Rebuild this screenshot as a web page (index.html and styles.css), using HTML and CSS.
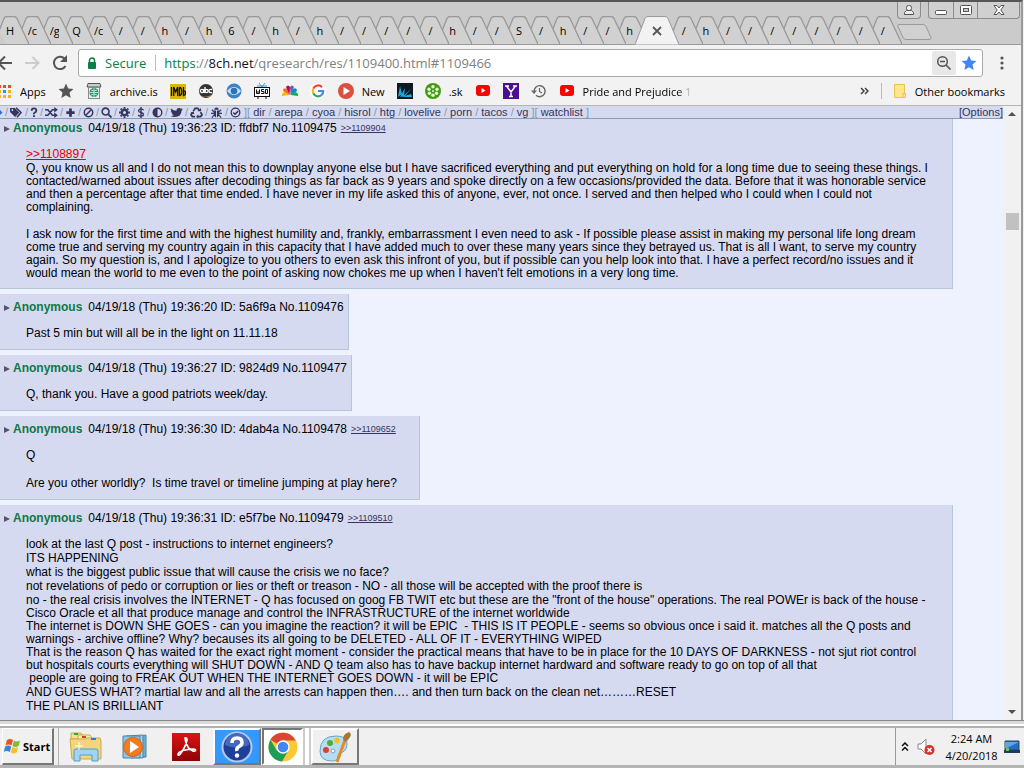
FILE: index.html
```html
<!DOCTYPE html>
<html lang="en">
<head>
  <meta charset="UTF-8">
  <meta name="viewport" content="width=device-width, initial-scale=1.0">
  <title>/qresearch/</title>
  <link rel="stylesheet" href="styles.css">
</head>
<body>
  <svg class="sprite" aria-hidden="true">
    <symbol id="youtube" viewBox="0 0 16 16"><rect x="1" y="2" width="14" height="11" rx="3" fill="#f00"/><path d="M6.500 5v5l4-2.500z" fill="#fff"/></symbol>
  </svg>

  <div class="browser">
    <header class="tab-strip">
      <div class="tabs" id="tabs"></div>
      <div class="strip-end">
        <div class="window-controls">
          <button class="user" aria-label="User"><svg width="12" height="12" viewBox="0 0 12 12"><rect x="3.500" y="1.500" width="5" height="5" rx="2" fill="#eee" stroke="#555"/><path d="M1.500 10.500V8.500l2-2h5l2 2v2z" fill="#eee" stroke="#555"/></svg></button>
          <button class="minimize" aria-label="Minimize"><svg width="12" height="12" viewBox="0 0 12 12"><rect x=".5" y="6.500" width="11" height="4" rx="1" fill="#fff" stroke="#555"/></svg></button>
          <button class="maximize" aria-label="Maximize"><svg width="12" height="12" viewBox="0 0 12 12"><rect x=".5" y="1.500" width="11" height="9" rx="1" fill="#fff" stroke="#555"/><rect x="3.500" y="4.500" width="5" height="3" fill="#ccc" stroke="#555"/></svg></button>
          <button class="close" aria-label="Close"><svg width="12" height="12" viewBox="0 0 12 12"><path d="M1 1.500h3l2 2.500 2-2.500h3L7.800 6l3.200 4.500H8L6 8l-2 2.500H1L4.200 6z" fill="#fff" stroke="#555"/></svg></button>
        </div>
        <button class="new-tab" aria-label="New tab"><svg width="35" height="18" viewBox="0 0 35 18"><path d="M2 1.500h24q2 0 3 2l5 11q0 2-2 2H9q-2 0-3-2L1 3.500q-.5-2 1-2z" fill="#d1d1d1" stroke="#999"/></svg></button>
      </div>
    </header>

    <div class="toolbar">
      <button class="nav-button back" aria-label="Back"><svg width="18" height="18" viewBox="0 0 18 18"><path d="M17 9H4M10 2.500L3.500 9l6.500 6.500" fill="none" stroke="#555" stroke-width="2"/></svg></button>
      <button class="nav-button" aria-label="Forward"><svg width="18" height="18" viewBox="0 0 18 18"><path d="M2 9h13M9.500 3l6 6-6 6" fill="none" stroke="#ccc" stroke-width="2"/></svg></button>
      <button class="nav-button" aria-label="Reload"><svg width="18" height="18" viewBox="0 0 18 18"><path d="M14.500 12A6.200 6.200 0 1 1 13.500 4.500" fill="none" stroke="#555" stroke-width="2"/><path d="M16 1v7H9z" fill="#555"/></svg></button>
      <div class="omnibox">
        <svg width="10" height="13" viewBox="0 0 10 13"><path d="M2.500 6V3.500a2.500 2.500 0 0 1 5 0V6" fill="none" stroke="#0b8043" stroke-width="1.500"/><rect x="1" y="5" width="8" height="7" rx="1" fill="#0b8043"/></svg>
        <span class="secure">Secure</span>
        <span class="url"><span class="scheme">https</span>://<span class="host">8ch.net</span>/qresearch/res/1109400.html#1109466</span>
        <button class="zoom-button" aria-label="Zoom"><svg width="16" height="16" viewBox="0 0 16 16"><circle cx="6.500" cy="6.500" r="4.800" fill="none" stroke="#555" stroke-width="1.500"/><path d="M4 6.500h5M10 10l4.500 4.500" stroke="#555" stroke-width="1.700"/></svg></button>
        <button class="star-button" aria-label="Bookmarked"><svg width="16" height="16" viewBox="0 0 16 16"><path d="M8 .5l2.200 5 5.300.5-4 3.600 1.200 5.400L8 12.200 3.300 15l1.200-5.400-4-3.600 5.300-.5z" fill="#4285f4"/></svg></button>
      </div>
      <button class="menu-button" aria-label="Menu"><svg width="4" height="14" viewBox="0 0 4 14" fill="#555"><circle cx="2" cy="2" r="1.600"/><circle cx="2" cy="7" r="1.600"/><circle cx="2" cy="12" r="1.600"/></svg></button>
    </div>

    <nav class="bookmarks">
      <a href="#"><svg width="12" height="14" viewBox="0 0 12 14"><path d="M0 1h1v3H0zM3 1h3v3H3z" fill="#f44336"/><path d="M8 1h3v3H8z" fill="#f44336"/><path d="M0 6h1v3H0zM8 6h3v3H8z" fill="#fbb400"/><path d="M3 6h3v3H3z" fill="#2196f3"/><path d="M0 11h1v3H0zM3 11h3v3H3zM8 11h3v3H8z" fill="#fbb400"/></svg>Apps</a>
      <a href="#" aria-label="Starred"><svg width="16" height="16" viewBox="0 0 16 16"><path d="M8 .5l2.200 5 5.300.5-4 3.600 1.200 5.400L8 12.200 3.300 15l1.200-5.400-4-3.600 5.300-.5z" fill="#555"/></svg></a>
      <a href="#"><svg width="16" height="16" viewBox="0 0 16 16"><path d="M2 .5h12l1 3.500H1z" fill="#ccc" stroke="#555"/><rect x="2.500" y="4.500" width="11" height="11" fill="#eee" stroke="#888"/><circle cx="8" cy="9.500" r="4.500" fill="#159a6b"/><path d="M3.500 9.500h9M8 5v9M5 7q3 2 6 0M5 12q3-2 6 0" stroke="#aee5cf" fill="none"/></svg>archive.is</a>
      <a href="#" aria-label="IMDb"><svg width="16" height="16" viewBox="0 0 16 16"><rect width="16" height="15" y="1" fill="#d9b516"/><path d="M1.500 4v9M3.700 13V4l2 5 2-5v9M9.500 4.500v8q2.300 0 2.300-4t-2.300-4M13.500 4v8.500q2 0 2-2.500t-2-2" fill="none" stroke="#111" stroke-width="1.300"/></svg></a>
      <a href="#" aria-label="abc"><svg width="16" height="16" viewBox="0 0 16 16"><circle cx="8" cy="8" r="7" fill="#333"/><path d="M3 13q5 2 10-1L12 14H5z" fill="#b8933f"/><g fill="none" stroke="#fff" stroke-width="1.300"><circle cx="4" cy="8" r="1.600"/><path d="M6 6v4M7 4v6M14 6.500q-3-.5-3 1.500t3 1.500"/><circle cx="8.500" cy="8" r="1.600"/></g></svg></a>
      <a href="#" aria-label="CBS"><svg width="16" height="16" viewBox="0 0 16 16"><circle cx="8" cy="8" r="7.500" fill="#3d83c4"/><path d="M1 8q7-8 14 0-7 8-14 0z" fill="#cce2f5"/><circle cx="8" cy="8" r="3.300" fill="#2973b9"/></svg></a>
      <a href="#" aria-label="WSD"><svg width="16" height="16" viewBox="0 0 16 16"><path d="M5 0l3 4 3-4M3 3h10" fill="none" stroke="#3a9ad9"/><rect x=".5" y="4.500" width="15" height="9" fill="#fff" stroke="#111"/><path d="M2.500 6.500v4h3v-4M4 8v2.500M10 6.500H7.500v2H10v2H7M11.500 6.500v4h2v-4zM4 14v2M12 14v2" fill="none" stroke="#111"/></svg></a>
      <a href="#" aria-label="NBC"><svg width="16" height="16" viewBox="0 0 16 16"><path d="M7.500 12L0 13q-1-3 3-4z" fill="#fcb711"/><path d="M7.500 12L1 8q0-4 4-2z" fill="#f37021"/><path d="M7.500 12L4 4q2-3 4 0z" fill="#cc004c"/><path d="M8.500 12L8 4q2-3 4 0z" fill="#6460aa"/><path d="M8.500 12L11 6q4-2 4 2z" fill="#0089d0"/><path d="M8.500 12L13 9q4 1 3 4z" fill="#0db14b"/></svg></a>
      <a href="#" aria-label="Google"><svg width="16" height="16" viewBox="0 0 16 16"><circle cx="8" cy="8" r="8" fill="#fff"/><g fill="none" stroke-width="2.200"><path d="M12 4.200A5.200 5.200 0 0 0 3.300 5.700" stroke="#ea4335"/><path d="M3.300 5.700a5.200 5.200 0 0 0 0 4.600" stroke="#fbbc05"/><path d="M3.300 10.300A5.200 5.200 0 0 0 11.500 12" stroke="#34a853"/><path d="M11.500 12A5 5 0 0 0 13.200 8H8" stroke="#4285f4"/></g></svg></a>
      <a href="#"><svg width="16" height="16" viewBox="0 0 16 16"><circle cx="8" cy="8" r="8" fill="#d9503f"/><path d="M5.500 4v8l6.500-4z" fill="#fff"/></svg>New</a>
      <a href="#" aria-label="Fan"><svg width="16" height="16" viewBox="0 0 16 16"><rect width="16" height="16" fill="#101820"/><path d="M1 14L3 3l2 8zM3 14l5-9-1 8zM5 14l9-8-6 7zM4 14h11l-1-3z" fill="#1fa7e0"/></svg></a>
      <a href="#"><svg width="16" height="16" viewBox="0 0 16 16"><circle cx="8" cy="8" r="8" fill="#3f9b12"/><g fill="#e8f6d8"><circle cx="8" cy="3.800" r="1.700"/><circle cx="8" cy="12.200" r="1.700"/><circle cx="4" cy="6.200" r="1.700"/><circle cx="12" cy="6.200" r="1.700"/><circle cx="4.500" cy="10.300" r="1.700"/><circle cx="11.500" cy="10.300" r="1.700"/><circle cx="8" cy="8" r="1"/></g></svg>.sk</a>
      <a href="#" aria-label="YouTube"><svg width="16" height="16"><use href="#youtube"/></svg></a>
      <a href="#" aria-label="Yahoo"><svg width="16" height="16" viewBox="0 0 16 16"><rect width="16" height="16" fill="#4a0d93"/><path d="M3.500 3L8 9l4.500-6M8 8.500V14M2 3h4M10 3h4M6 13.500h4" fill="none" stroke="#fff" stroke-width="1.500"/></svg></a>
      <a href="#" aria-label="History"><svg width="16" height="16" viewBox="0 0 16 16"><path d="M3.200 9A5.500 5.500 0 1 1 5 12.300" fill="none" stroke="#666" stroke-width="1.400"/><path d="M0 7.500h6l-3 3.500z" fill="#666"/><path d="M8.500 5v3.500l2.500 1.500" fill="none" stroke="#666" stroke-width="1.200"/></svg></a>
      <a href="#" class="faded"><svg width="16" height="16"><use href="#youtube"/></svg>Pride and Prejudice 1</a>
      <button class="overflow" aria-label="More bookmarks"><svg width="9" height="8" viewBox="0 0 9 8"><path d="M1 1l3 3-3 3M5 1l3 3-3 3" fill="none" stroke="#444" stroke-width="1.500"/></svg></button>
      <a href="#" class="other"><svg width="14" height="16" viewBox="0 0 14 16"><path d="M1.500 1.500h10v13h-10z" fill="#ffe68f" stroke="#e8c34d"/><path d="M10 10.500h2.500v4H10z" fill="#ffe68f" stroke="#e8c34d"/></svg>Other bookmarks</a>
    </nav>

    <div class="viewport">
      <main class="page">
        <nav class="boardlist">
          <a href="#" class="icon edge" aria-label="Home"><svg viewBox="0 0 12 12"><path d="M8 2l4 4-4 4z" fill="#2a70c8"/></svg></a><i>/</i>
          <a href="#" class="icon wide" aria-label="Tags"><svg viewBox="0 0 14 12"><path d="M0 1h5l5 5-4.500 5L0 5.500z"/><path d="M6.500 1l5.500 5-4.500 5.200" fill="none" stroke="#34345c" stroke-width="1.600"/><circle cx="2.500" cy="3.300" r="1" fill="#d6daf0"/></svg></a><i>/</i>
          <a href="#" class="icon slim" aria-label="Help"><svg viewBox="0 0 8 12"><path d="M1.500 4q0-2.500 2.500-2.500T6.500 4Q6.500 5.300 5 6T4 8" fill="none" stroke="#34345c" stroke-width="2"/><path d="M3 9h2v2H3z"/></svg></a><i>/</i>
          <a href="#" class="icon wide" aria-label="Random"><svg viewBox="0 0 14 12"><path d="M0 3h3l5 6h3M0 9h3l5-6h3" fill="none" stroke="#34345c" stroke-width="1.700"/><path d="M10 0l4 3-4 3zM10 6l4 3-4 3z"/></svg></a><i>/</i>
          <a href="#" class="icon" aria-label="New board"><svg viewBox="0 0 12 12"><path d="M4.500 1.500h3v3h3v3h-3v3h-3v-3h-3v-3h3z"/></svg></a><i>/</i>
          <a href="#" class="icon" aria-label="Bans"><svg viewBox="0 0 12 12"><circle cx="6" cy="6" r="4.600" fill="none" stroke="#34345c" stroke-width="1.600"/><path d="M2.800 9.200l6.400-6.400" stroke="#34345c" stroke-width="1.600"/></svg></a><i>/</i>
          <a href="#" class="icon" aria-label="Search"><svg viewBox="0 0 12 12"><circle cx="5" cy="5" r="3.800" fill="none" stroke="#34345c" stroke-width="1.700"/><path d="M8 8l3.500 3.500" stroke="#34345c" stroke-width="2"/></svg></a><i>/</i>
          <a href="#" class="icon" aria-label="Manage"><svg viewBox="0 0 12 12"><circle cx="6" cy="6" r="3" fill="none" stroke="#34345c" stroke-width="2.600"/><path d="M6 0v2M6 10v2M0 6h2M10 6h2M1.800 1.800L3 3M9 9l1.200 1.200M1.800 10.200L3 9M9 3l1.200-1.200" stroke="#34345c" stroke-width="2"/></svg></a><i>/</i>
          <a href="#" class="icon slim" aria-label="Donate"><svg viewBox="0 0 8 12"><path d="M6.700 3.500Q6 2 4 2T1.300 4q0 1.500 2.700 2t2.700 2q0 2-2.700 2T1.300 8.500M4 0v12" fill="none" stroke="#34345c" stroke-width="1.500"/></svg></a><i>/</i>
          <a href="#" class="icon" aria-label="Contrast"><svg viewBox="0 0 12 12"><circle cx="6" cy="6" r="4.700" fill="none" stroke="#34345c" stroke-width="1.500"/><path d="M6 1a5 5 0 0 0 0 10z"/></svg></a><i>/</i>
          <a href="#" class="icon wide" aria-label="Twitter"><svg viewBox="0 0 14 12"><path d="M1 1.500Q3.500 4 7 4q0-3 2.700-3 1.200 0 2 .8L13.500 1l-1 1.800 1.500-.3-1.500 1.700Q12.300 11 5 11 2.500 11 .5 9.800q2 .2 3.700-1-2-.3-2.500-2h1Q.8 6 .8 4l1 .3Q0 3 1 1.500z"/></svg></a><i>/</i>
          <a href="#" class="icon wide" aria-label="Recycle"><svg viewBox="0 0 14 12"><path d="M3.500 4.500L5.500 1.500h3l1.500 2.500M11.500 5.500L13 8.500 11.500 10.500H8M5.500 10.500h-3L1 8.500 2.500 6" fill="none" stroke="#34345c" stroke-width="1.900"/><path d="M8 4.500h4V1zM9 8v4.500L6.500 10.500zM.5 6.500L4 4.500 4.500 8z"/></svg></a><i>/</i>
          <a href="#" class="icon wide" aria-label="Bug"><svg viewBox="0 0 14 12"><path d="M4.500 3Q4.500.500 7 .500T9.500 3zM3.800 3.800h2.700V11.500Q3.800 11 3.800 8zM7.500 3.800h2.700V8q0 3-2.700 3.500z"/><path d="M4 5L2 3M10 5l2-2M4 7H1M10 7h3M4 9l-2 2.500M10 9l2 2.500" stroke="#34345c" stroke-width="1.300"/></svg></a><i>/</i>
          <a href="#" class="icon" aria-label="Claim"><svg viewBox="0 0 12 12"><circle cx="6" cy="6" r="4.700" fill="none" stroke="#34345c" stroke-width="1.400"/><path d="M3.500 6l2 2L9 4.500" fill="none" stroke="#34345c" stroke-width="1.600"/></svg></a>
          <span class="boards">][ <a href="#">dir</a> / <a href="#">arepa</a> / <a href="#">cyoa</a> / <a href="#">hisrol</a> / <a href="#">htg</a> / <a href="#">lovelive</a> / <a href="#">porn</a> / <a href="#">tacos</a> / <a href="#">vg</a> ][ <a href="#">watchlist</a> ]</span>
          <a href="#" class="options">[Options]</a>
        </nav>

        <div class="thread">
          <article class="post">
            <p class="intro"><a href="#" class="arrow" aria-label="Post menu"></a><b class="name">Anonymous</b><span>04/19/18 (Thu) 19:36:23 ID: ffdbf7 No.1109475</span><a href="#" class="mentioned">&gt;&gt;1109904</a></p>
            <div class="body">
              <p><a href="#" class="quote">&gt;&gt;1108897</a></p>
              <p>Q, you know us all and I do not mean this to downplay anyone else but I have sacrificed everything and put everything on hold for a long time due to seeing these things. I contacted/warned about issues after decoding things as far back as 9 years and spoke directly on a few occasions/provided the data. Before that it was honorable service and then a percentage after that time ended. I have never in my life asked this of anyone, ever, not once. I served and then helped who I could when I could not complaining.</p>
              <p></p>
              <p>I ask now for the first time and with the highest humility and, frankly, embarrassment I even need to ask - If possible please assist in making my personal life long dream come true and serving my country again in this capacity that I have added much to over these many years since they betrayed us. That is all I want, to serve my country again. So my question is, and I apologize to you others to even ask this infront of you, but if possible can you help look into that. I have a perfect record/no issues and it would mean the world to me even to the point of asking now chokes me up when I haven't felt emotions in a very long time.</p>
            </div>
          </article>

          <article class="post">
            <p class="intro"><a href="#" class="arrow" aria-label="Post menu"></a><b class="name">Anonymous</b><span>04/19/18 (Thu) 19:36:20 ID: 5a6f9a No.1109476</span></p>
            <div class="body">
              <p>Past 5 min but will all be in the light on 11.11.18</p>
            </div>
          </article>

          <article class="post">
            <p class="intro"><a href="#" class="arrow" aria-label="Post menu"></a><b class="name">Anonymous</b><span>04/19/18 (Thu) 19:36:27 ID: 9824d9 No.1109477</span></p>
            <div class="body">
              <p>Q, thank you. Have a good patriots week/day.</p>
            </div>
          </article>

          <article class="post">
            <p class="intro"><a href="#" class="arrow" aria-label="Post menu"></a><b class="name">Anonymous</b><span>04/19/18 (Thu) 19:36:30 ID: 4dab4a No.1109478</span><a href="#" class="mentioned">&gt;&gt;1109652</a></p>
            <div class="body">
              <p>Q</p>
              <p></p>
              <p>Are you other worldly?&nbsp; Is time travel or timeline jumping at play here?</p>
            </div>
          </article>

          <article class="post">
            <p class="intro"><a href="#" class="arrow" aria-label="Post menu"></a><b class="name">Anonymous</b><span>04/19/18 (Thu) 19:36:31 ID: e5f7be No.1109479</span><a href="#" class="mentioned">&gt;&gt;1109510</a></p>
            <div class="body">
              <p>look at the last Q post - instructions to internet engineers?</p>
              <p>ITS HAPPENING</p>
              <p>what is the biggest public issue that will cause the crisis we no face?</p>
              <p>not revelations of pedo or corruption or lies or theft or treason - NO - all those will be accepted with the proof there is</p>
              <p>no - the real crisis involves the INTERNET - Q has focused on goog FB TWIT etc but these are the "front of the house" operations. The real POWEr is back of the house - Cisco Oracle et all that produce manage and control the INFRASTRUCTURE of the internet worldwide</p>
              <p>The internet is DOWN SHE GOES - can you imagine the reaction? it will be EPIC&nbsp; - THIS IS IT PEOPLE - seems so obvious once i said it. matches all the Q posts and warnings - archive offline? Why? becauses its all going to be DELETED - ALL OF IT - EVERYTHING WIPED</p>
              <p>That is the reason Q has waited for the exact right moment - consider the practical means that have to be in place for the 10 DAYS OF DARKNESS - not sjut riot control but hospitals courts everything will SHUT DOWN - AND Q team also has to have backup internet hardward and software ready to go on top of all that</p>
              <p>&nbsp;people are going to FREAK OUT WHEN THE INTERNET GOES DOWN - it will be EPIC</p>
              <p>AND GUESS WHAT? martial law and all the arrests can happen then…. and then turn back on the clean net………RESET</p>
              <p>THE PLAN IS BRILLIANT</p>
            </div>
          </article>
        </div>
      </main>
      <div class="scrollbar">
        <span class="scroll-up"></span>
        <span class="scroll-thumb"></span>
        <span class="scroll-down"></span>
      </div>
    </div>
  </div>

  <footer class="taskbar">
    <button class="start"><svg width="17" height="16" viewBox="0 0 17 16"><path d="M3 2q3-2 6 0L7.500 7.500q-3-2-6 0z" fill="#e8502c"/><path d="M10 2.500q3 2 6 0L14.500 8q-3 2-6 0z" fill="#7db93c"/><path d="M1.200 8.500q3-2 6 0L5.700 14q-3-2-6 0z" fill="#3a83d0"/><path d="M8.200 9q3 2 6 0l-1.500 5.500q-3 2-6 0z" fill="#fbc127"/></svg>Start</button>
    <div class="apps">
      <button aria-label="Explorer"><svg width="34" height="32" viewBox="0 0 34 32"><path d="M2 2h10l2 2v4H2z" fill="#f6df92" stroke="#cda94b"/><path d="M9 4h12l2 3v3H9z" fill="#f9e8a8" stroke="#cda94b"/><path d="M18 7h13l1 3v18H3L1 8h16z" fill="#f2d67c" stroke="#cda94b"/><path d="M5 2h4v2H5z" fill="#2fa53c"/><path d="M13 5h4v2h-4z" fill="#d43b27"/><path d="M22 7h5v2h-5z" fill="#2d7fd0"/><path d="M5 30V20q0-2 2-2h20q2 0 2 2v10h-6v-6H11v6z" fill="#9fd5f3" stroke="#569bc8"/><path d="M10 11v8M6 15h8" stroke="#fff"/></svg></button>
      <button aria-label="Media Player"><svg width="30" height="28" viewBox="0 0 30 28"><path d="M10 4l15-2v22l-15 1z" fill="#6caed3" stroke="#4887ac"/><path d="M5 3l17-1v23l-17-1z" fill="#a5d3ea" stroke="#4887ac"/><path d="M2 3h17v22H2z" fill="#8cc4e2" stroke="#4887ac"/><circle cx="12" cy="14" r="9.500" fill="#f47c20" stroke="#d8630d"/><path d="M9 8v12l9-6z" fill="#fff"/></svg></button>
      <button aria-label="Acrobat Reader"><svg width="28" height="28" viewBox="0 0 28 28"><defs><linearGradient id="red" x2="0" y2="1"><stop stop-color="#e01212"/><stop offset="1" stop-color="#8a0505"/></linearGradient></defs><path d="M0 0h28v28H0z" fill="url(#red)"/><path d="M13 5q2-1 2 2-1 6-6 13-3 4-3 1 1-4 15-5 4 0 2 2-3 1-7-4-3-5-3-9z" fill="none" stroke="#fff" stroke-width="1.600"/></svg></button>
      <button class="raised help" aria-label="Help"><svg width="32" height="32" viewBox="0 0 32 32"><circle cx="16" cy="16" r="14.500" fill="#1d3f9a" stroke="#b7c6e2" stroke-width="2"/><path d="M4 14a12 12 0 0 1 24 0q-12 5-24 0z" fill="#4469bd"/><path d="M11 12q0-5 5-5t5 4.500q0 2.500-3 4T16 20" fill="none" stroke="#fff" stroke-width="3.500"/><circle cx="16" cy="24.500" r="2.200" fill="#fff"/></svg></button>
      <button class="pressed" aria-label="Chrome"><svg width="30" height="30" viewBox="0 0 30 30"><circle cx="15" cy="15" r="14.500" fill="#fcc934"/><path d="M15 15L2.400 7.800A14.500 14.500 0 0 1 27.600 8.500H15z" fill="#db4437"/><path d="M2.400 7.800A14.500 14.500 0 0 0 14 29.500L20.600 18.200 15 15 8.800 18.500z" fill="#1b9e5a"/><circle cx="15" cy="15" r="6.700" fill="#fff"/><circle cx="15" cy="15" r="5.300" fill="#4285f4"/></svg></button>
      <span class="stack"></span>
      <button class="raised" aria-label="Paint"><svg width="34" height="32" viewBox="0 0 34 32"><path d="M2 20Q2 5 18 5q12 0 11 9-1 7-7 8-3 1-2 4 0 4-6 4Q2 30 2 20z" fill="#b8dcf0" stroke="#6ea4c4"/><circle cx="8" cy="19" r="3" fill="#e33d2e"/><circle cx="12" cy="12" r="3" fill="#4fae3a"/><circle cx="19" cy="9.500" r="2.700" fill="#f3c11d"/><circle cx="15" cy="20" r="2" fill="#fff" stroke="#6ea4c4"/><path d="M27 9l-8 22" stroke="#e48b27" stroke-width="3"/><path d="M25 8q0-5 6-7 3 2 1 5-2 4-5 5z" fill="#a9743b"/></svg></button>
    </div>
    <div class="tray">
      <svg width="8" height="10" viewBox="0 0 8 10"><path d="M1 4l3-3 3 3M1 8.500l3-3 3 3" fill="none" stroke="#111" stroke-width="1.500"/></svg>
      <svg width="18" height="18" viewBox="0 0 18 18"><path d="M1 6h3l5-5v15l-5-5H1z" fill="#fff" stroke="#888"/><circle cx="12.500" cy="12" r="5" fill="#d93025"/><path d="M10.500 10l4 4M14.500 10l-4 4" stroke="#fff" stroke-width="1.600"/></svg>
      <div class="clock">2:24 AM<br>4/20/2018</div>
      <svg width="16" height="14" viewBox="0 0 16 14"><path d="M1 1h14v9H1z" fill="#1f6fc4" stroke="#345"/><path d="M1 2h14L3 8H1z" fill="#5ba6e8"/><path d="M0 10h16v3H0z" fill="#223d5c"/><path d="M2 8h3v3H2z" fill="#7ac143"/></svg>
    </div>
  </footer>

  <script>
    // Titles are clipped down to the first character or two
    const titles = ['H', '/c', '/g', 'Q', '/c', '/', '/', 'h', '/', 'h', '6', '/', 'h', '/', 'h', '/', '/', '/', '/', '/', 'h', '/', '/', 'S', '/', 'h', '/', '/', 'h', '✕', '/', 'h', '/', '/', '/', '/', '/', '/', '/', '/'];
    const activeTab = 29;
    const tabs = document.getElementById('tabs');

    titles.forEach((title, i) => {
      const active = i === activeTab;
      const shape = active
        ? '<svg width="44" height="29" viewBox="0 0 44 29"><path d="M0 28.500L10 2.500Q11 .5 13 .5h17q2 0 3 2L44 28.500" fill="#f2f2f2" stroke="#999"/></svg>'
        : '<svg width="30" height="28" viewBox="0 0 30 28"><path d="M0 15L5 2.500Q6 .5 8 .5h7q2 0 3 2L30 28H7z" fill="#d1d1d1"/><path d="M0 15L5 2.500Q6 .5 8 .5h7q2 0 3 2L30 28" fill="none" stroke="#999" stroke-width="1.300"/></svg>';
      const tab = document.createElement('button');
      tab.className = active ? 'tab active' : 'tab';
      // each tab lies over the one to its right
      tab.style.zIndex = active ? titles.length + 1 : titles.length - i;
      const label = active
        ? '<svg class="x" width="10" height="10" viewBox="0 0 10 10"><path d="M1 1l8 8M9 1L1 9" stroke="#555" stroke-width="1.800"/></svg>'
        : '<span>' + title + '</span>';
      tab.innerHTML = shape + label;
      tab.setAttribute('aria-label', active ? 'Close tab' : title);
      tabs.appendChild(tab);
    });
  </script>
</body>
</html>
```
FILE: styles.css
```css
* {
  box-sizing: border-box;
}

body {
  margin: 0;
  height: 100vh;
  display: flex;
  flex-direction: column;
  overflow: hidden;
  background: #f0f0f0;
  font-family: "Open Sans", "Noto Sans", sans-serif;
  font-size: 11px;
  color: #000;
}

p {
  margin: 0;
}

button {
  margin: 0;
  padding: 0;
  border: 0;
  background: none;
  font: inherit;
  color: inherit;
}

a {
  color: inherit;
  text-decoration: none;
}

svg {
  flex: none;
  display: block;
}

.sprite {
  position: absolute;
  width: 0;
  height: 0;
}

.browser {
  flex: 1;
  min-height: 0;
  display: flex;
  flex-direction: column;
  background: #f2f2f2;
  border-top: 2px solid #555;
  border-right: 2px solid #999;
  margin-right: 1px;
}

/* Tab strip */
.tab-strip {
  display: flex;
  height: 43px;
  background: #cbcbcb;
  border-bottom: 1px solid #999;
}

.tabs {
  flex: 1;
  display: flex;
  align-items: flex-end;
  margin-left: -1px;
}

.tab {
  position: relative;
  flex: 1 1 0;
  min-width: 0;
  height: 28px;
  text-align: center;
}

.tab svg {
  position: absolute;
  left: 0;
  top: 0;
}

.tab span {
  position: relative;
  display: block;
  width: 9px;
  margin: 0 auto;
  overflow: hidden;
  white-space: nowrap;
}

.tab.active {
  flex: 0 0 32px;
}

.tab.active svg {
  left: -6px;
}

.tab.active svg.x {
  left: 11px;
  top: 10px;
}

.strip-end {
  width: 127px;
  padding-left: 3px;
}

.window-controls {
  display: flex;
  height: 17px;
}

.window-controls button {
  display: flex;
  align-items: center;
  justify-content: center;
  width: 25px;
  border: 1px solid #8c8c8c;
  border-top: 0;
  background: #d0d0d0;
}

.window-controls .user {
  width: 24px;
  margin-right: 7px;
  border-radius: 0 0 4px 4px;
}

.window-controls .minimize {
  border-right: 0;
  border-radius: 0 0 0 4px;
}

.window-controls .close {
  width: 42px;
  border-left: 0;
  border-radius: 0 0 4px 0;
}

.new-tab {
  margin-top: 4px;
}

/* Address bar */
.toolbar {
  display: flex;
  align-items: center;
  height: 34px;
  padding-top: 2px;
}

.nav-button {
  display: flex;
  justify-content: center;
  width: 28px;
}

.nav-button.back {
  margin-left: -10px;
}

.omnibox {
  flex: 1;
  display: flex;
  align-items: center;
  height: 28px;
  margin-left: 4px;
  padding: 0 5px 0 8px;
  border: 1px solid #a9a9a9;
  border-radius: 3px;
  background: #fff;
  font-size: 13px;
}

.secure {
  margin-left: 8px;
  padding-right: 9px;
  border-right: 1px solid #bbb;
  line-height: 16px;
  color: #0b8043;
}

.url {
  flex: 1;
  margin-left: 8px;
  color: #808080;
}

.scheme {
  color: #0b8043;
}

.host {
  color: #111;
}

.zoom-button {
  display: flex;
  align-items: center;
  justify-content: center;
  width: 24px;
  height: 24px;
  margin-right: 5px;
  border-radius: 2px;
  background: #e8e8e8;
}

.menu-button {
  width: 38px;
  display: flex;
  justify-content: center;
}

/* Bookmarks */
.bookmarks {
  display: flex;
  align-items: center;
  gap: 12px;
  height: 27px;
  padding: 0 16px 2px 0;
  border-bottom: 1px solid #b5b5b5;
  white-space: nowrap;
}

.bookmarks a {
  display: flex;
  align-items: center;
  gap: 8px;
}

.bookmarks .faded {
  -webkit-mask-image: linear-gradient(to right, #000 90%, transparent);
  mask-image: linear-gradient(to right, #000 90%, transparent);
}

.overflow {
  margin-left: auto;
}

.bookmarks .other {
  padding-left: 11px;
  border-left: 1px solid #bbb;
}

/* Page */
.viewport {
  flex: 1;
  min-height: 0;
  display: flex;
}

.page {
  flex: 1;
  min-width: 0;
  overflow: hidden;
  background: #eef2ff;
  font-family: Arial, "Liberation Sans", sans-serif;
  color: #000;
}

.boardlist {
  position: relative;
  z-index: 1;
  display: flex;
  align-items: center;
  gap: 2px;
  height: 13px;
  background: #d6daf0;
  border-bottom: 1px solid #8a9bb5;
  font-size: 11px;
  line-height: 12px;
  color: #89a;
  white-space: nowrap;
}

.boardlist i {
  width: 3px;
  font-style: normal;
}

.boardlist a {
  color: #34345c;
}

.icon {
  width: 11px;
}

.icon.wide {
  width: 13px;
}

.icon.slim {
  width: 8px;
}

.icon.edge {
  width: 12px;
  margin-left: -9px;
}

.icon svg {
  width: 100%;
  height: 11px;
  fill: #34345c;
}

.boards {
  margin-left: 1px;
}

.options {
  margin-left: auto;
}

.thread {
  margin-top: -4px;
}

.post {
  width: fit-content;
  max-width: 95%;
  margin-bottom: 5px;
  padding: 7px 4px 8px;
  background: #d6daf0;
  border: solid #b7c5d9;
  border-width: 0 1px 1px 0;
  font-size: 12px;
  line-height: 13px;
}

.intro {
  display: flex;
  align-items: center;
  height: 13px;
  margin-bottom: 13px;
  white-space: nowrap;
}

.arrow {
  margin-right: 3px;
  border: solid transparent;
  border-width: 3px 0 3px 6px;
  border-left-color: #556;
}

.name {
  margin-right: 6px;
  color: #117743;
}

.mentioned {
  margin-left: 4px;
  font-size: 9px;
  color: #34345c;
  text-decoration: underline;
}

.body {
  padding: 0 18px 0 22px;
}

.body p {
  min-height: 14px;
}

.quote {
  color: #d00;
  text-decoration: underline;
}

/* Scrollbar */
.scrollbar {
  display: flex;
  flex-direction: column;
  align-items: center;
  width: 18px;
  padding: 6px 0;
  background: #f1f1f1;
}

.scroll-up {
  border: solid transparent;
  border-width: 0 4px 4px;
  border-bottom-color: #505050;
}

.scroll-thumb {
  width: 13px;
  height: 17px;
  margin: 97px 0 auto;
  background: #c1c1c1;
}

.scroll-down {
  border: solid transparent;
  border-width: 4px 4px 0;
  border-top-color: #505050;
}

/* Taskbar */
.taskbar {
  display: flex;
  align-items: stretch;
  height: 48px;
  padding-top: 3px;
  border-top: 1px solid #888;
  border-bottom: 3px solid #b4b4b4;
  background: linear-gradient(#d8d8d8 3px, #fff 3px, #fff 5px, #b0b0b0 5px, #b0b0b0 7px, #f0f0f0 7px);
}

.start {
  display: flex;
  align-items: center;
  gap: 2px;
  width: 52px;
  margin: 4px 0 0 2px;
  padding-left: 1px;
  border: 1px solid #fff;
  border-right: 2px solid #777;
  border-bottom: 2px solid #777;
  background: #f0f0f0;
  font-weight: bold;
  white-space: nowrap;
}

.apps {
  flex: 1;
  display: flex;
  align-items: stretch;
  margin: 4px 0 0 4px;
  border-left: 1px solid #b4b4b4;
}

.apps button {
  display: flex;
  align-items: center;
  justify-content: center;
  width: 50px;
}

.apps button:first-child {
  margin-left: 2px;
}

.apps .raised {
  width: 48px;
  border: 2px solid #fff;
  border-right-color: #777;
  border-bottom-color: #777;
}

.apps .help {
  margin-left: 2px;
  background: #3399ff;
}

.apps .pressed {
  width: 41px;
  margin-left: 1px;
  border: 2px solid #777;
  border-right-color: #fff;
  border-bottom-color: #fff;
  background: #fff;
}

.stack {
  width: 8px;
  border: solid #ccc;
  border-width: 0 2px;
  background: #fff;
}

.tray {
  display: flex;
  align-items: center;
  gap: 8px;
  padding: 0 4px 0 5px;
  margin-top: 4px;
  border-left: 1px solid #999;
}

.clock {
  width: 57px;
  margin-right: -4px;
  line-height: 17px;
  text-align: center;
}
```
